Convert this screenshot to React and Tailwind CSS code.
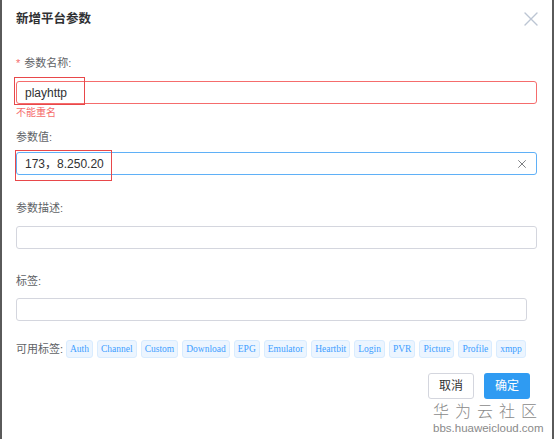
const tags = ['Auth', 'Channel', 'Custom', 'Download', 'EPG', 'Emulator', 'Heartbit', 'Login', 'PVR', 'Picture', 'Profile', 'xmpp'];

function CloseIcon({ size, color, width }) {
  return (
    <svg width={size} height={size} viewBox="0 0 14 14" fill="none">
      <path d="M1 1L13 13M13 1L1 13" stroke={color} strokeWidth={width} strokeLinecap="round" />
    </svg>
  );
}

export default function App() {
  return (
    <div
      className="relative w-[554px] h-[439px] overflow-hidden bg-white border-l-2 border-r-2 border-[#5a5a5a] text-[#606266]"
      style={{ fontFamily: '"Liberation Sans", "Noto Sans CJK SC", sans-serif' }}
    >
      {/* Header */}
      <div className="flex items-center justify-between pl-[14px] pr-[14px] pt-[11px] h-[27px]">
        <h1 className="text-[12.5px] leading-[16px] font-bold text-[#303133]">新增平台参数</h1>
        <CloseIcon size={14} color="#bcc5d3" width={1.4} />
      </div>

      {/* Form */}
      <div className="pl-[14px] pr-[15px]">
        <div className="mt-[28px] text-[11px] leading-[16px] flex items-center">
          <span className="text-[#f56c6c] mr-[4px]">*</span>
          参数名称:
        </div>
        <div className="mt-[10px] h-[23px] rounded-[3px] border border-[#f56c6c] flex items-center px-[8px] text-[12px] text-[#303133]">
          playhttp
        </div>
        <div className="mt-[2px] text-[10px] leading-[14px] text-[#f56c6c]">不能重名</div>

        <div className="mt-[9px] text-[11px] leading-[16px]">参数值:</div>
        <div className="mt-[7px] h-[23px] rounded-[3px] border border-[#5fb0f7] flex items-center justify-between pl-[8px] pr-[10px] text-[12px] text-[#303133]">
          <span>173，8.250.20</span>
          <CloseIcon size={8} color="#505256" width={1.3} />
        </div>

        <div className="mt-[25px] text-[11px] leading-[16px]">参数描述:</div>
        <div className="mt-[10px] h-[23px] rounded-[3px] border border-[#d4d6de]" />

        <div className="mt-[24px] text-[11px] leading-[16px]">标签:</div>
        <div className="mt-[9px] h-[23px] w-[511px] rounded-[3px] border border-[#d4d6de]" />

        <div className="mt-[19px] flex items-center gap-[4px] whitespace-nowrap">
          <span className="shrink-0 w-[46px] text-[11px] leading-[18px]">可用标签:</span>
          {tags.map((t) => (
            <span
              key={t}
              className="shrink-0 h-[18px] px-[3px] flex items-center rounded-[3px] bg-[#ecf5ff] border border-[#d9ecff] text-[#409eff] text-[9.5px]"
              style={{ fontFamily: '"Liberation Serif", serif' }}
            >
              {t}
            </span>
          ))}
        </div>
      </div>

      {/* Footer */}
      <div className="mt-[15px] flex justify-end gap-[10px] pr-[22px]">
        <button className="w-[46px] h-[26px] rounded-[3px] border border-[#d4d6de] bg-white text-[12px] text-[#303133]">
          取消
        </button>
        <button className="w-[46px] h-[26px] rounded-[3px] bg-[#2f9bf2] text-[12px] text-white">
          确定
        </button>
      </div>

      {/* Input highlight frames */}
      <div className="absolute left-[12px] top-[77px] w-[71px] h-[28px] border border-[#e8484a]" />
      <div className="absolute left-[13px] top-[150px] w-[97px] h-[31px] border border-[#e8484a]" />

      {/* Watermark */}
      <div className="absolute left-[431px] top-[400px] flex flex-col items-start text-[#8a8a8a]">
        <span className="text-[16px] leading-[20px] font-light tracking-[6px]" style={{ fontFamily: '"Noto Sans CJK SC", sans-serif' }}>
          华为云社区
        </span>
        <span className="text-[11.5px] leading-[14px] mt-[1px]">bbs.huaweicloud.com</span>
      </div>
    </div>
  );
}
